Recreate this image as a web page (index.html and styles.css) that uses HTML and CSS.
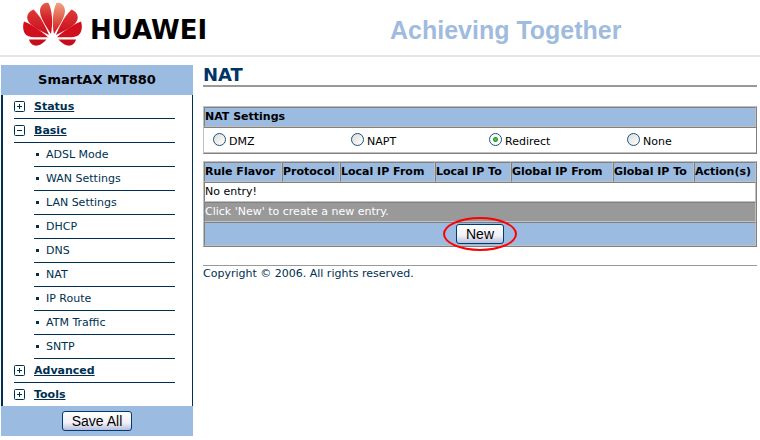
FILE: index.html
```html
<!DOCTYPE html>
<html lang="en">
<head>
  <meta charset="UTF-8" />
  <meta name="viewport" content="width=device-width, initial-scale=1" />
  <title>SmartAX MT880</title>
  <link rel="stylesheet" href="styles.css">
</head>
<body>

<header class="banner">
  <div class="brand">
    <svg class="logo" viewBox="0 0 60 46" width="60" height="46" aria-hidden="true">
      <defs>
        <linearGradient id="petalLeft" x1="0" y1="0" x2="0" y2="1">
          <stop offset="0" stop-color="#e0604a" />
          <stop offset="0.5" stop-color="#d3202a" />
          <stop offset="1" stop-color="#cf0f1c" />
        </linearGradient>
        <linearGradient id="petalRight" x1="0" y1="0" x2="0" y2="1">
          <stop offset="0" stop-color="#f0a184" />
          <stop offset="0.5" stop-color="#e2604b" />
          <stop offset="1" stop-color="#cf0f1c" />
        </linearGradient>
        <linearGradient id="petalSide" x1="0" y1="0" x2="0" y2="1">
          <stop offset="0" stop-color="#de3b38" />
          <stop offset="1" stop-color="#c90c1b" />
        </linearGradient>
        <path id="inner" d="M28 33C30 23 29.500 9 25.500 2C21.500 1 17 4.500 17 10C17 16 22 23.500 28 33Z" />
        <g id="outer">
          <path fill="url(#petalSide)" d="M26 34C22 24 16.500 14 10.500 8.500C6.500 10 3.800 13.500 4.300 17.500C5.500 24.500 15 28.500 26 34Z" />
          <path fill="#d0101c" d="M25 36.200C18 30 9 23.500 1 20.500C-.8 25.500 .2 31.500 3.500 34.300C7.500 37.200 17 36.200 25 36.200Z" />
          <path fill="#c90c1b" d="M23.500 38.500H6C7 42.500 10.500 45.300 14.500 44.600C18 43.800 21 41.500 23.500 38.500Z" />
        </g>
      </defs>
      <use href="#inner" fill="url(#petalLeft)" />
      <use href="#outer" />
      <g transform="matrix(-1 0 0 1 59 0)">
        <use href="#inner" fill="url(#petalRight)" />
        <use href="#outer" />
      </g>
    </svg>
    <span class="brand-name">HUAWEI</span>
  </div>
  <div class="tagline">Achieving Together</div>
</header>

<div class="page">
  <nav class="sidebar">
    <div class="model">SmartAX MT880</div>
    <ul class="menu">
      <li><svg class="toggle" viewBox="0 0 11 11"><rect x=".5" y=".5" width="10" height="10" rx="1" /><path d="M3 5.500h5M5.500 3v5" /></svg><a href="#">Status</a></li>
      <li><svg class="toggle" viewBox="0 0 11 11"><rect x=".5" y=".5" width="10" height="10" rx="1" /><path d="M3 5.500h5" /></svg><a href="#">Basic</a></li>
      <li class="group">
        <ul class="submenu">
          <li><a href="#">ADSL Mode</a></li>
          <li><a href="#">WAN Settings</a></li>
          <li><a href="#">LAN Settings</a></li>
          <li><a href="#">DHCP</a></li>
          <li><a href="#">DNS</a></li>
          <li><a href="#">NAT</a></li>
          <li><a href="#">IP Route</a></li>
          <li><a href="#">ATM Traffic</a></li>
          <li><a href="#">SNTP</a></li>
        </ul>
      </li>
      <li><svg class="toggle" viewBox="0 0 11 11"><rect x=".5" y=".5" width="10" height="10" rx="1" /><path d="M3 5.500h5M5.500 3v5" /></svg><a href="#">Advanced</a></li>
      <li><svg class="toggle" viewBox="0 0 11 11"><rect x=".5" y=".5" width="10" height="10" rx="1" /><path d="M3 5.500h5M5.500 3v5" /></svg><a href="#">Tools</a></li>
    </ul>
    <div class="save"><button class="btn" type="button">Save All</button></div>
  </nav>

  <main class="content">
    <h1>NAT</h1>

    <form>
      <table class="grid settings">
        <tr><th colspan="4">NAT Settings</th></tr>
        <tr class="modes">
          <td><input type="radio" name="nat" id="dmz"><label for="dmz">DMZ</label></td>
          <td><input type="radio" name="nat" id="napt"><label for="napt">NAPT</label></td>
          <td><input type="radio" name="nat" id="redirect" checked><label for="redirect">Redirect</label></td>
          <td><input type="radio" name="nat" id="none"><label for="none">None</label></td>
        </tr>
      </table>

      <table class="grid rules">
        <colgroup>
          <col class="c-flavor"><col class="c-protocol"><col class="c-lfrom"><col class="c-lto">
          <col class="c-gfrom"><col class="c-gto"><col class="c-action">
        </colgroup>
        <tr>
          <th>Rule Flavor</th>
          <th>Protocol</th>
          <th>Local IP From</th>
          <th>Local IP To</th>
          <th>Global IP From</th>
          <th>Global IP To</th>
          <th>Action(s)</th>
        </tr>
        <tr><td colspan="7">No entry!</td></tr>
        <tr class="hint"><td colspan="7">Click 'New' to create a new entry.</td></tr>
        <tr class="actions">
          <td colspan="7"><span class="marked"><button class="btn" type="button">New</button></span></td>
        </tr>
      </table>
    </form>

    <footer>Copyright © 2006. All rights reserved.</footer>
  </main>
</div>

</body>
</html>
```
FILE: styles.css
```css
body {
  margin: 0;
  background: #fff;
  color: #000;
  font-family: Verdana, "DejaVu Sans", sans-serif;
  font-size: 11px;
  line-height: 16px;
}
.banner {
  display: flex;
  align-items: center;
  height: 55px;
  border-bottom: 2px solid #e5e5e5;
}
.brand {
  display: flex;
  flex: 0 0 366px;
  gap: 7px;
  padding: 0 0 8px 23px;
  box-sizing: border-box;
  align-items: center;
}
.brand-name {
  padding-top: 12px;
  font-size: 26px;
  line-height: 30px;
  font-weight: bold;
}
.tagline {
  padding: 4px 0 0 24px;
  color: #9fbbdd;
  font-family: Arial, "Liberation Sans", sans-serif;
  font-size: 25px;
  line-height: 30px;
  font-weight: bold;
}
.page {
  display: flex;
  align-items: flex-start;
  gap: 10px;
  padding: 8px 3px 4px 1px;
}
.sidebar {
  flex: 0 0 192px;
  background: #9bbbe1;
}
.model {
  line-height: 30px;
  font-size: 13px;
  font-weight: bold;
  text-align: center;
}
.menu, .submenu {
  margin: 0;
  padding: 0;
  list-style: none;
}
.menu {
  padding: 0 17px 0 11px;
  border-left: 2px solid #003050;
  border-right: 1px solid #003050;
  background: #fff;
}
.menu li {
  display: flex;
  align-items: center;
  height: 24px;
  box-sizing: border-box;
  border-bottom: 1px solid #003050;
}
.menu > li:last-child {
  height: 23px;
  border-bottom: none;
}
.menu > li > a {
  font-weight: bold;
}
.menu a {
  color: #003050;
}
.menu .group {
  display: block;
  height: auto;
  padding-left: 20px;
  border-bottom: none;
}
.submenu li::before {
  content: "";
  width: 3px;
  height: 3px;
  margin: 0 7px 0 2px;
  background: #003050;
}
.submenu a {
  text-decoration: none;
}
.toggle {
  width: 11px;
  height: 11px;
  margin-right: 9px;
  fill: none;
  stroke: #003050;
}
.save {
  display: flex;
  height: 30px;
  align-items: center;
  justify-content: center;
}
.btn {
  height: 20px;
  padding: 0 9px;
  border: 1px solid #003c74;
  border-radius: 3px;
  background: linear-gradient(#fff, #f0f0f6 60%, #b9bfdc);
  color: #000;
  font-family: Arial, "Liberation Sans", sans-serif;
  font-size: 14px;
  line-height: 18px;
}
.content {
  flex: 1;
  min-width: 0;
}
h1 {
  margin: 0 0 19px;
  border-bottom: 2px solid #999;
  color: #003366;
  font-size: 18px;
  line-height: 20px;
}
.grid {
  width: 100%;
  margin-bottom: 7px;
  table-layout: fixed;
  border-collapse: separate;
  border-spacing: 0;
  border: 1px solid;
  border-color: #c0c0c0 #808080 #808080 #c0c0c0;
}
.grid th, .grid td {
  height: 18px;
  padding: 0;
  border: 1px solid;
  border-color: #808080 #c0c0c0 #c0c0c0 #808080;
  text-align: left;
  white-space: nowrap;
}
.grid th {
  background: #9bbbe1;
}
.settings .modes td {
  height: 22px;
  padding: 2px 0 0 9px;
  border-left: none;
  border-right: none;
}
.modes input {
  appearance: none;
  width: 13px;
  height: 13px;
  margin: 0 3px 0 0;
  border: 1px solid #1c5180;
  border-radius: 50%;
  background: linear-gradient(135deg, #dcdcd7, #fff);
  vertical-align: -1px;
}
.modes input:checked {
  background: radial-gradient(circle, #55d551 0, #21a121 2px, #fff 3px);
}
.c-flavor { width: 78px; }
.c-protocol { width: 58px; }
.c-lfrom { width: 95px; }
.c-lto { width: 76px; }
.c-gfrom { width: 102px; }
.c-gto { width: 81px; }
.c-action { width: 62px; }
.grid .hint td {
  background: #999;
  color: #fff;
}
.grid .actions td {
  height: 22px;
  background: #9bbbe1;
  text-align: center;
}
.marked {
  position: relative;
  display: inline-block;
}
/* red ring round the button */
.marked::after {
  content: "";
  position: absolute;
  inset: -7px -13px;
  border: 2px solid #f00;
  border-radius: 50%;
  pointer-events: none;
}
footer {
  margin-top: 18px;
  border-top: 1px solid #999;
  color: #003050;
}
```
